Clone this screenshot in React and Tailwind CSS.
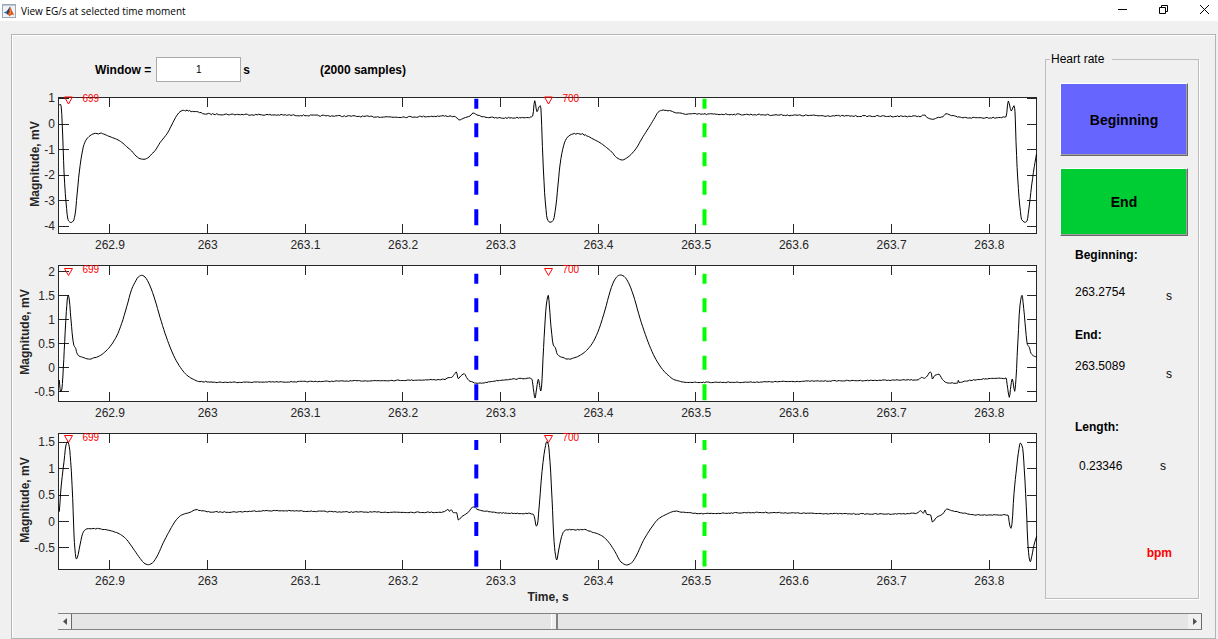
import { useState } from "react";

// plot frame, in figure coordinates
const LEFT = 59;
const RIGHT = 1037;
const PLOT_HEIGHT = 137;

const timeTicks = [
  "262.9",
  "263",
  "263.1",
  "263.2",
  "263.3",
  "263.4",
  "263.5",
  "263.6",
  "263.7",
  "263.8",
];

const peaks = [
  { label: "699", x: 68.5 },
  { label: "700", x: 548.5 },
];

const cursors = [
  { x: 476.3, color: "#0000ff" },
  { x: 704.5, color: "#00ff00" },
];

const charts = [
  {
    top: 97,
    height: 168,
    zero: 124,
    scale: 25.6,
    ticks: [1, 0, -1, -2, -3, -4],
    labelX: 39,
    markerY: 100,
    peakY: 102,
    cursorY: 98.7,
    noise: 1.3,
    points: [
      [59, 105], [60.7, 104.5], [61.3, 108], [62.7, 135], [64, 172], [66, 202],
      [67.7, 218], [68.7, 221], [71, 222.5], [73.3, 221], [75, 215],
      [77.3, 192], [79.3, 172], [81.7, 155], [84, 144.5], [86.7, 139],
      [90, 135.7], [94, 133.7], [100, 133.3], [105, 134.7], [110, 136.7],
      [116.7, 139.3], [121.7, 142.3], [126.7, 146.7], [131.7, 151], [136, 156],
      [140, 158.7], [144, 159.3], [147.7, 158], [151.7, 154], [155, 150.7],
      [160, 142.7], [167.3, 133.3], [171.7, 125], [176.7, 115.7],
      [180, 111.7], [183.3, 110.3], [188.3, 110.7], [196.7, 112], [207, 114],
      [260, 114.7], [340, 116], [400, 117], [450, 116], [457, 117.7],
      [459, 120], [464, 118], [470, 116], [473, 113], [478, 115.3],
      [490, 117.5], [500, 118], [531, 117], [532.7, 116], [534.7, 100.7],
      [537, 111.7], [539, 107], [540.3, 105.7], [541, 110], [542, 135],
      [543.3, 168], [545.3, 202], [547.3, 219], [550, 222.3], [553.3, 220.3],
      [556, 205], [558, 185], [560, 165], [562.7, 149.3], [565.3, 140.7],
      [568.7, 136], [573, 134], [580, 133.7], [586.7, 135.7], [593, 139],
      [600, 142.7], [606.7, 147.7], [611.7, 152], [616.7, 157.7],
      [622.3, 160], [626.7, 158], [635, 150], [643, 136.7], [650, 125.7],
      [655, 117.3], [658, 112.3], [661.7, 110.3], [668, 110.3], [676.7, 113],
      [687, 114], [730, 114.3], [850, 116], [920, 116.3], [925, 115],
      [926.7, 117.3], [932.7, 119.3], [938.3, 117.3], [943, 116.3],
      [946, 113.7], [951.7, 115.7], [963, 117.7], [983, 117.7], [1006, 117],
      [1008.3, 101], [1011.3, 111], [1014, 105.7], [1015, 111.7],
      [1016, 141.7], [1017.7, 178], [1019.7, 205], [1021.7, 219.7],
      [1025.3, 222.3], [1027, 221], [1029, 208], [1031.7, 185],
      [1034.3, 166.7], [1036.5, 154],
    ],
  },
  {
    top: 265,
    height: 168,
    zero: 367.7,
    scale: 48,
    ticks: [2, 1.5, 1, 0.5, 0, -0.5],
    labelX: 29,
    markerY: 271.5,
    peakY: 273,
    cursorY: 273.7,
    noise: 0.8,
    points: [
      [59.3, 380], [60, 388.3], [60.7, 391.7], [62, 388], [63.3, 368],
      [64.7, 341.7], [66.3, 311.7], [67.7, 296.7], [68.3, 295.3],
      [69.3, 300], [71, 320], [72.7, 338], [74, 345.7], [75.7, 348.3],
      [76.7, 352.7], [79, 356], [82.7, 357.3], [88.3, 359], [95, 357.7],
      [100.7, 355.3], [106, 351], [110, 346.7], [116.7, 336],
      [121.7, 323.3], [126.7, 306.7], [131.7, 289.3], [135, 282.3],
      [138.3, 277], [141.7, 275.3], [145, 277], [150, 286], [155, 300],
      [160, 317.3], [165, 333.3], [170, 347], [175, 358.3], [181.7, 369.3],
      [186.7, 375], [193.3, 379.3], [200, 381.7], [210, 381.7],
      [213, 382.3], [270, 382], [350, 381], [420, 380], [445, 379.3],
      [448, 377.7], [451.7, 377.3], [454.3, 374.3], [456.3, 372],
      [458.3, 378.7], [460.7, 376], [464.3, 373.7], [466.7, 377.7],
      [470, 381.3], [477.3, 383.3], [496.7, 380.7], [510, 379.3],
      [530, 378.3], [532, 379.3], [533.3, 388.3], [535, 398], [536.7, 388],
      [538.3, 379.3], [539.7, 385.7], [540.7, 391], [541.7, 385],
      [543, 358.3], [544.7, 328], [546.3, 305], [548.3, 295.3],
      [549.3, 305], [551, 326.7], [553.3, 345], [555.3, 347.7],
      [557.3, 354.3], [561.7, 357.3], [568.3, 359], [575, 357.7],
      [581.7, 354.3], [586.7, 350.3], [593.3, 341.7], [599.3, 328.3],
      [605, 310], [610, 291.7], [614, 281], [617.7, 276], [620.7, 275],
      [624, 276.3], [628.3, 282.3], [633.3, 295], [640, 318.3],
      [646.7, 338.3], [653.3, 354.3], [660, 366], [666.7, 374], [675, 380],
      [685, 382.3], [730, 382.3], [800, 381.3], [880, 380.3], [918.3, 379.7],
      [921.7, 377.3], [924.3, 378.3], [927.3, 376], [930, 372],
      [931.3, 373], [932.3, 379], [935, 375.3], [939, 374.3],
      [942.3, 379.3], [946.7, 382.7], [957.7, 383], [958.3, 380.3],
      [959, 382.3], [966.7, 381], [983.3, 379], [1006, 378.3],
      [1007.7, 388.3], [1009.3, 397.3], [1011, 385], [1012.3, 379],
      [1014.7, 391.3], [1016, 378.3], [1017.7, 345], [1020, 305],
      [1022, 295.3], [1023.7, 308.3], [1025.7, 330], [1027.3, 344.3],
      [1029.3, 347.3], [1031, 353.3], [1033.7, 356], [1036.7, 357],
    ],
  },
  {
    top: 433,
    height: 180,
    zero: 521.5,
    scale: 52.8,
    ticks: [1.5, 1, 0.5, 0, -0.5],
    labelX: 29,
    markerY: 438.5,
    peakY: 441,
    cursorY: 440,
    noise: 0.9,
    points: [
      [59.3, 511.7], [61.3, 485], [64, 461.7], [66, 445], [67.7, 441.7],
      [69.3, 446.7], [70.7, 461.7], [72.7, 498.3], [74, 535],
      [75.3, 553.3], [76.3, 559], [77.3, 557.7], [80, 545], [82.7, 533.3],
      [85.3, 529.7], [90, 528.7], [97.3, 528.7], [110, 530.7],
      [116.7, 532.7], [121.7, 535.3], [126.7, 539.7], [133.3, 548.7],
      [140, 558.3], [145, 563.7], [148.3, 564.7], [152.3, 563],
      [156.7, 557], [163.3, 542.7], [170, 530], [176.7, 519.3],
      [181.7, 515], [190, 512.3], [196, 509.7], [201.7, 510.7], [210, 512],
      [230, 512], [270, 510.7], [300, 511], [350, 512], [440, 512.3],
      [446, 510.7], [448, 509.3], [449.3, 511.3], [451.3, 509.7],
      [453.3, 512.7], [456.7, 512.7], [458.3, 520], [461.7, 516.7],
      [468.3, 512.3], [472.3, 507.3], [474.3, 507], [476.7, 509],
      [483.3, 511], [503.3, 513], [532.7, 513.7], [534.3, 516.7],
      [536.3, 526], [537.3, 525], [539.3, 505], [542, 471.7],
      [545, 448.3], [546.7, 441.7], [548.3, 444.3], [550, 461.7],
      [552, 498.3], [553.7, 535], [555, 551.7], [556.7, 560], [558.7, 550],
      [561.7, 536.3], [564, 531.3], [566.7, 529.7], [583.3, 529.7],
      [593.3, 532.3], [601.7, 535.7], [608.3, 541.7], [615, 551.7],
      [621, 562], [626.7, 565], [631.7, 562.7], [636.7, 555],
      [643.3, 540.7], [653.3, 525], [658.3, 519], [665, 515],
      [675, 511.3], [686.7, 512.7], [700, 513.7], [730, 513],
      [760, 512.5], [820, 513.5], [880, 514], [916.7, 513.3],
      [920.7, 510.7], [923.3, 513.3], [925, 510], [926.7, 514.3],
      [930.7, 515], [932.3, 522], [936.7, 517.3], [942.7, 514],
      [946.7, 509], [951.7, 510.7], [963.3, 513], [973.3, 514.7],
      [1008, 515], [1009.7, 525], [1011, 528.3], [1012, 523.3],
      [1014, 493.3], [1016, 473.3], [1018.3, 453.3], [1020.3, 443],
      [1022.7, 448.3], [1024.3, 470], [1026.3, 506.7], [1027.7, 540],
      [1029, 556.7], [1030.3, 561.7], [1031.7, 556.7], [1034, 545],
      [1036.7, 536],
    ],
  },
];

// Monotone cubic through the samples, with a little baseline noise on flat parts.
function tracePath(points, noise) {
  const slopes = [];
  for (let i = 0; i < points.length - 1; i++) {
    const [x0, y0] = points[i];
    const [x1, y1] = points[i + 1];
    slopes.push((y1 - y0) / (x1 - x0));
  }
  const tangents = points.map((p, i) => {
    const a = slopes[i - 1];
    const b = slopes[i];
    if (a === undefined) return b;
    if (b === undefined) return a;
    return a * b <= 0 ? 0 : (2 * a * b) / (a + b);
  });

  let seed = 7;
  let d = `M${points[0][0]} ${points[0][1]}`;
  for (let i = 0; i < slopes.length; i++) {
    const [x0, y0] = points[i];
    const [x1, y1] = points[i + 1];
    const w = x1 - x0;
    const steps = Math.max(3, Math.round(w / 1.4));
    for (let k = 1; k <= steps; k++) {
      const t = k / steps;
      const t2 = t * t;
      const t3 = t2 * t;
      let y =
        (2 * t3 - 3 * t2 + 1) * y0 +
        (t3 - 2 * t2 + t) * w * tangents[i] +
        (3 * t2 - 2 * t3) * y1 +
        (t3 - t2) * w * tangents[i + 1];
      seed = (seed * 16807) % 2147483647;
      if (Math.abs(slopes[i]) < 0.3 && w > 4) {
        y += (seed / 2147483647 - 0.5) * noise;
      }
      d += `L${(x0 + w * t).toFixed(1)} ${y.toFixed(1)}`;
    }
  }
  return d;
}

const Chart = ({ chart, xLabel }) => {
  const { top } = chart;
  const bottom = top + PLOT_HEIGHT;
  const middle = top + 67;

  return (
    <svg
      viewBox={`12 ${top - 7} 1026 ${chart.height}`}
      className="block w-full h-auto text-xs"
      fill="#262626"
    >
      <rect
        x={LEFT}
        y={top}
        width={RIGHT - LEFT}
        height={PLOT_HEIGHT}
        fill="#fff"
      />
      <g stroke="#262626" shapeRendering="crispEdges" fill="none">
        <rect
          x={LEFT - 0.5}
          y={top + 0.5}
          width={RIGHT - LEFT}
          height={PLOT_HEIGHT - 1}
        />
        {timeTicks.map((t, i) => {
          const x = Math.floor(109.7 + i * 97.7) + 0.5;
          return (
            <path
              key={t}
              d={`M${x} ${top}v10M${x} ${bottom}v-10`}
            />
          );
        })}
        {chart.ticks.map((v) => {
          const y = Math.floor(chart.zero - v * chart.scale) + 0.5;
          return <path key={v} d={`M${LEFT} ${y}h10M${RIGHT} ${y}h-10`} />;
        })}
      </g>
      {timeTicks.map((t, i) => (
        <text key={t} x={110 + i * 97.7} y={bottom + 15} textAnchor="middle">
          {t}
        </text>
      ))}
      {chart.ticks.map((v) => (
        <text
          key={v}
          x={55}
          y={chart.zero - v * chart.scale + 4}
          textAnchor="end"
        >
          {v}
        </text>
      ))}
      <text
        x={chart.labelX}
        y={middle}
        textAnchor="middle"
        className="font-bold"
        transform={`rotate(-90 ${chart.labelX} ${middle})`}
      >
        Magnitude, mV
      </text>
      <path
        d={tracePath(chart.points, chart.noise)}
        fill="none"
        stroke="#000"
        strokeLinejoin="round"
      />
      {cursors.map((c) => (
        <path
          key={c.color}
          d={`M${c.x} ${chart.cursorY}v126.5`}
          stroke={c.color}
          strokeWidth="4"
          strokeDasharray="10 14.5 14 15 14 14.5 14 14.5 16"
        />
      ))}
      {peaks.map((p) => (
        <g key={p.label}>
          <path
            d={`M${p.x - 4} ${chart.markerY - 3}h8l-4 7z`}
            fill="none"
            stroke="#ff0000"
          />
          <text
            x={p.x + 14}
            y={chart.peakY}
            fill="#ff0000"
            className="text-[10px]"
          >
            {p.label}
          </text>
        </g>
      ))}
      {xLabel && (
        <text
          x={548}
          y={bottom + 31}
          textAnchor="middle"
          className="font-bold"
        >
          {xLabel}
        </text>
      )}
    </svg>
  );
};

const TitleBar = () => (
  <header className="flex items-center h-[21px] pl-0.5 pr-2 bg-white">
    <svg width="14" height="14" viewBox="0 0 14 14" aria-hidden="true">
      <rect x="0.5" y="0.5" width="13" height="13" fill="#eef2f6" stroke="#9aa9b8" />
      <path d="M1 1.5h12" stroke="#b9c9d8" />
      <path d="M1.5 8.5L5 7l2-1.5L8 9 5.5 10.5 4 9.5z" fill="#3c78b4" />
      <path d="M5 7l3-4.5L7.5 8 5.5 10.5 4.5 9z" fill="#27406e" />
      <path d="M8 2.5c1 1 2 5.500 4.500 8.500-1.500-.8-2.500-.6-3.500 0L7.500 12.500c-.5-1-1-1.500-2-2C7 9.500 7.500 5 8 2.500z" fill="#d9541e" />
      <path d="M8 3c.4 2 .3 5-.8 8l1.300-1C9 7 8.700 5 8 3z" fill="#f6a33b" />
    </svg>
    <h1 className="ml-[5px] text-[10px] leading-4 font-['Open_Sans',sans-serif]">
      View EG/s at selected time moment
    </h1>
    <div className="ml-auto flex gap-[30px]">
      <button type="button" aria-label="Minimize">
        <svg width="11" height="11" viewBox="0 0 11 11" stroke="#000">
          <path d="M1 4.500h9" />
        </svg>
      </button>
      <button type="button" aria-label="Restore">
        <svg width="11" height="11" viewBox="0 0 11 11" stroke="#000" fill="none">
          <path d="M1.500 2.500h6v6h-6zM3.500 2.500v-2h6v6h-2" />
        </svg>
      </button>
      <button type="button" aria-label="Close">
        <svg width="11" height="11" viewBox="0 0 11 11" stroke="#000">
          <path d="M1 0l9 9M10 0l-9 9" />
        </svg>
      </button>
    </div>
  </header>
);

const App = () => {
  const [windowSize, setWindowSize] = useState("1");
  const [position, setPosition] = useState(4315);

  return (
    <div className="flex flex-col min-h-screen bg-[#f0f0f0] text-xs text-black font-['Liberation_Sans',Arial,sans-serif]">
      <TitleBar />
      <main className="flex-1 mt-[13px] ml-[11px] mr-0.5 pb-2 border border-[#b4b4b4] shadow-[inset_1px_1px_0_#fff]">
        <div className="flex items-stretch">
          <div className="flex-1 min-w-0">
            <div className="flex items-center mt-[22px] mb-2 pl-[83px] font-bold">
              <label htmlFor="window">Window =</label>
              <input
                id="window"
                value={windowSize}
                onChange={(e) => setWindowSize(e.target.value)}
                className="w-[85px] h-[25px] ml-[5px] mr-0.5 border border-[#ababab] bg-white text-center text-[10px] font-normal"
              />
              <span>s</span>
              <span className="ml-[70px]">(2000 samples)</span>
            </div>
            {charts.map((c, i) => (
              <Chart
                key={c.top}
                chart={c}
                xLabel={i === charts.length - 1 ? "Time, s" : ""}
              />
            ))}
          </div>
          <fieldset className="w-[154px] mt-4 mb-[7px] ml-[7px] mr-4 border border-[#bdbdbd] shadow-[1px_1px_0_#fff]">
            <legend className="ml-1 px-px pr-2 leading-4">Heart rate</legend>
            <div className="flex flex-col gap-3 mt-4 pl-3.5 pr-2.5">
              <button
                type="button"
                className="h-[73px] border border-t-white border-l-white border-r-[#696969] border-b-[#696969] bg-[#6666ff] text-sm font-bold shadow-[inset_-1px_-1px_0_#a0a0a0]"
              >
                Beginning
              </button>
              <button
                type="button"
                className="h-[68px] border border-t-white border-l-white border-r-[#696969] border-b-[#696969] bg-[#00cc33] text-sm font-bold shadow-[inset_-1px_-1px_0_#a0a0a0]"
              >
                End
              </button>
            </div>
            <div className="mt-[11px] pl-[29px] pr-[26px] leading-4">
              <h2 className="font-bold">Beginning:</h2>
              <div className="flex justify-between h-5 mt-[21px]">
                <span>263.2754</span>
                <span className="self-end">s</span>
              </div>
              <h2 className="mt-[23px] font-bold">End:</h2>
              <div className="flex justify-between h-6 mt-[15px]">
                <span>263.5089</span>
                <span className="self-end">s</span>
              </div>
              <h2 className="mt-[37px] font-bold">Length:</h2>
              <div className="flex justify-between mt-[23px] pl-1 pr-1.5">
                <span>0.23346</span>
                <span>s</span>
              </div>
              <p className="mt-[71px] text-right font-bold text-[#ff0000]">
                bpm
              </p>
            </div>
          </fieldset>
        </div>
        <div className="flex h-[17px] mt-[7px] ml-[46px] mr-[13px] border-y border-[#828282] bg-[#e5e5e5]">
          <button
            type="button"
            aria-label="Scroll left"
            onClick={() => setPosition(Math.max(0, position - 100))}
            className="flex items-center justify-center w-3.5 border-r border-[#696969] bg-[#f0f0f0]"
          >
            <svg width="4" height="7" viewBox="0 0 4 7" fill="#505050">
              <path d="M4 0v7L0 3.500z" />
            </svg>
          </button>
          <input
            type="range"
            aria-label="Time position"
            min="0"
            max="10000"
            value={position}
            onChange={(e) => setPosition(Number(e.target.value))}
            className="flex-1 min-w-0 h-full appearance-none bg-transparent [&::-webkit-slider-thumb]:appearance-none [&::-webkit-slider-thumb]:w-[7px] [&::-webkit-slider-thumb]:h-[15px] [&::-webkit-slider-thumb]:bg-[#f0f0f0] [&::-webkit-slider-thumb]:border-l [&::-webkit-slider-thumb]:border-l-white [&::-webkit-slider-thumb]:border-r-2 [&::-webkit-slider-thumb]:border-r-[#808080]"
          />
          <button
            type="button"
            aria-label="Scroll right"
            onClick={() => setPosition(Math.min(10000, position + 100))}
            className="flex items-center justify-center w-3.5 border-r border-[#696969] bg-[#f0f0f0]"
          >
            <svg width="4" height="7" viewBox="0 0 4 7" fill="#505050">
              <path d="M0 0v7l4-3.500z" />
            </svg>
          </button>
        </div>
      </main>
    </div>
  );
};

export default App;
